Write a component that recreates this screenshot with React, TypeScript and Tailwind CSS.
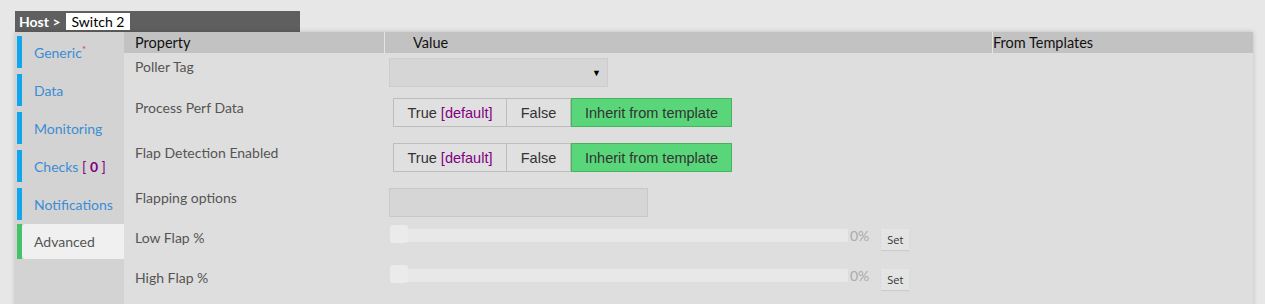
const sideItems = [
  { label: 'Generic', extra: 'star' },
  { label: 'Data' },
  { label: 'Monitoring' },
  { label: 'Checks', extra: 'count' },
  { label: 'Notifications' },
];

function Toggle() {
  return (
    <div className="flex h-[29px] font-['Liberation_Sans',Arial,sans-serif] text-[14.5px] text-[#333]">
      <div className="w-[114px] flex items-center justify-center border border-[#bdbdbd] bg-[#e0e0e0]">
        True&nbsp;<span className="text-[#800080]">[default]</span>
      </div>
      <div className="w-[64px] flex items-center justify-center border border-l-0 border-[#bdbdbd] bg-[#e0e0e0]">
        False
      </div>
      <div className="w-[161px] flex items-center justify-center border border-[#46b35e] bg-[#5ad67a]">
        Inherit from template
      </div>
    </div>
  );
}

function Slider() {
  return (
    <div className="flex items-start">
      <div className="relative w-[458px] h-[19px] ml-[2px]">
        <div className="absolute left-0 right-0 top-[4px] h-[13px] bg-[#e8e8e8] rounded-[2px]" />
        <div className="absolute left-0 top-0 w-[18px] h-[18px] bg-[#ebebeb] rounded-[3px]" />
      </div>
      <span className="ml-[2px] mt-[1px] text-[14px] text-[#aaa] leading-[20px]">0%</span>
      <button className="ml-[12px] mt-[4px] w-[28px] h-[21px] bg-[#e4e4e4] shadow-[0_1px_1px_rgba(0,0,0,0.08)] text-[11px] text-[#333] font-['Open_Sans',sans-serif]">
        Set
      </button>
    </div>
  );
}

export default function App() {
  return (
    <div className="min-h-screen bg-[#e7e7e7] pt-[11px] pl-[15px] pr-[12px] font-['Lato',sans-serif] overflow-hidden">
      <div className="w-[285px] h-[21px] bg-[#5f5f5f] flex items-center pl-[4px]">
        <span className="text-white font-bold text-[14px] leading-none">Host &gt;</span>
        <span className="ml-[5px] h-[17px] px-[6px] bg-white text-black text-[14px] leading-[17px]">Switch 2</span>
      </div>
      <div className="flex h-[280px] shadow-[0_0_5px_rgba(0,0,0,0.18)]">
        <div className="w-[109px] bg-[#d3d3d3] pt-[4px] flex flex-col gap-[6px]">
          {sideItems.map((it) => (
            <div key={it.label} className="h-[32px] flex items-center ml-[2px]">
              <div className="w-[5px] h-full bg-[#10a6ee]" />
              <span className="ml-[12px] text-[14px] text-[#3b8dd4]">
                {it.label}
                {it.extra === 'star' && <sup className="text-[#e23b3b] text-[10px]">*</sup>}
                {it.extra === 'count' && (
                  <span className="text-[#800080]">
                    {' '}[ <span className="font-bold">0</span> ]
                  </span>
                )}
              </span>
            </div>
          ))}
          <div className="h-[35px] flex items-center ml-[2px] -mt-[2px]">
            <div className="w-[5px] h-full bg-[#46c26a]" />
            <div className="flex-1 h-full bg-[#f0f0f0] rounded-l-[4px] flex items-center pl-[12px] text-[14px] text-[#555]">
              Advanced
            </div>
          </div>
        </div>
        <div className="flex-1 bg-[#dedede]">
          <div className="h-[21px] bg-[#c2c2c2] flex text-[14.5px] text-[#111] leading-[21px]">
            <div className="w-[261px] pl-[11px] border-r border-[#e4e4e4]">Property</div>
            <div className="w-[608px] pl-[28px] border-r border-[#e4e4e4]">Value</div>
            <div className="flex-1">From Templates</div>
          </div>
          <div className="pt-[4px] text-[14px] text-[#555] leading-[20px]">
            <div className="flex h-[41px]">
              <div className="w-[265px] pl-[11px]">Poller Tag</div>
              <div className="w-[219px] h-[29px] mt-[1px] bg-[#d6d6d6] border border-[#cdcdcd] flex items-center justify-end pr-[6px] text-[9px] text-black">
                ▼
              </div>
            </div>
            <div className="flex h-[45px]">
              <div className="w-[269px] pl-[11px]">Process Perf Data</div>
              <Toggle />
            </div>
            <div className="flex h-[45px]">
              <div className="w-[269px] pl-[11px]">Flap Detection Enabled</div>
              <Toggle />
            </div>
            <div className="flex h-[37px]">
              <div className="w-[265px] pl-[11px]">Flapping options</div>
              <div className="w-[259px] h-[29px] bg-[#d6d6d6] border border-[#c9c9c9]" />
            </div>
            <div className="flex h-[40px]">
              <div className="w-[264px] pl-[11px] pt-[3px]">Low Flap %</div>
              <Slider />
            </div>
            <div className="flex h-[40px]">
              <div className="w-[264px] pl-[11px] pt-[3px]">High Flap %</div>
              <Slider />
            </div>
          </div>
        </div>
      </div>
    </div>
  );
}
